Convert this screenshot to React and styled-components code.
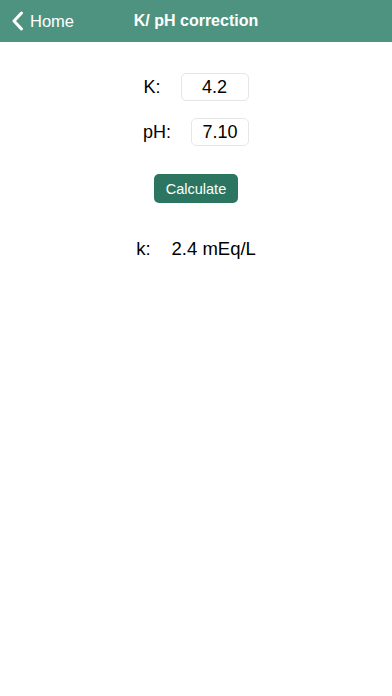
import React from "react";
import styled, { createGlobalStyle } from "styled-components";

const Global = createGlobalStyle`
  html, body { margin: 0; padding: 0; background: #ffffff; }
  body { font-family: "Liberation Sans", Arial, sans-serif; color: #000; }
`;

const Page = styled.div`
  width: 392px;
  min-height: 696px;
  background: #fff;
`;

const NavBar = styled.header`
  height: 42px;
  background: #4e9380;
  display: grid;
  grid-template-columns: 1fr auto 1fr;
  align-items: center;
  color: #fff;
`;

const Back = styled.div`
  display: flex;
  align-items: center;
  gap: 6px;
  padding-left: 11px;
  font-size: 16.5px;
`;

const Title = styled.div`
  font-size: 16px;
  font-weight: 700;
`;

const Content = styled.main`
  display: flex;
  flex-direction: column;
  align-items: center;
  padding-top: 31px;
`;

const Row = styled.div`
  display: flex;
  align-items: center;
  gap: 20px;
  margin-bottom: ${(p) => p.$mb}px;
  font-size: 18px;
`;

const Field = styled.div`
  width: ${(p) => p.$w}px;
  height: 28px;
  box-sizing: border-box;
  border: 1px solid #e6e6e6;
  border-radius: 5px;
  display: flex;
  align-items: center;
  justify-content: center;
  font-size: 18px;
`;

const Button = styled.button`
  width: 84px;
  height: 29px;
  background: #2c7560;
  color: #fff;
  border: none;
  border-radius: 5px;
  font-family: "Liberation Sans", Arial, sans-serif;
  font-size: 14.5px;
  padding: 0;
  margin-bottom: 35px;
`;

const Result = styled.div`
  display: flex;
  gap: 21px;
  font-size: 18.5px;
  line-height: 22px;
`;

export default function App() {
  return (
    <Page>
      <Global />
      <NavBar>
        <Back>
          <svg width="13" height="20" viewBox="0 0 13 20">
            <path d="M10.5 2 L3 10 L10.5 18" fill="none" stroke="#fff" strokeWidth="3" strokeLinecap="round" strokeLinejoin="round" />
          </svg>
          <span>Home</span>
        </Back>
        <Title>K/ pH correction</Title>
        <div />
      </NavBar>
      <Content>
        <Row $mb={17}>
          <span>K:</span>
          <Field $w={68}>4.2</Field>
        </Row>
        <Row $mb={28}>
          <span>pH:</span>
          <Field $w={58}>7.10</Field>
        </Row>
        <Button>Calculate</Button>
        <Result>
          <span>k:</span>
          <span>2.4 mEq/L</span>
        </Result>
      </Content>
    </Page>
  );
}
